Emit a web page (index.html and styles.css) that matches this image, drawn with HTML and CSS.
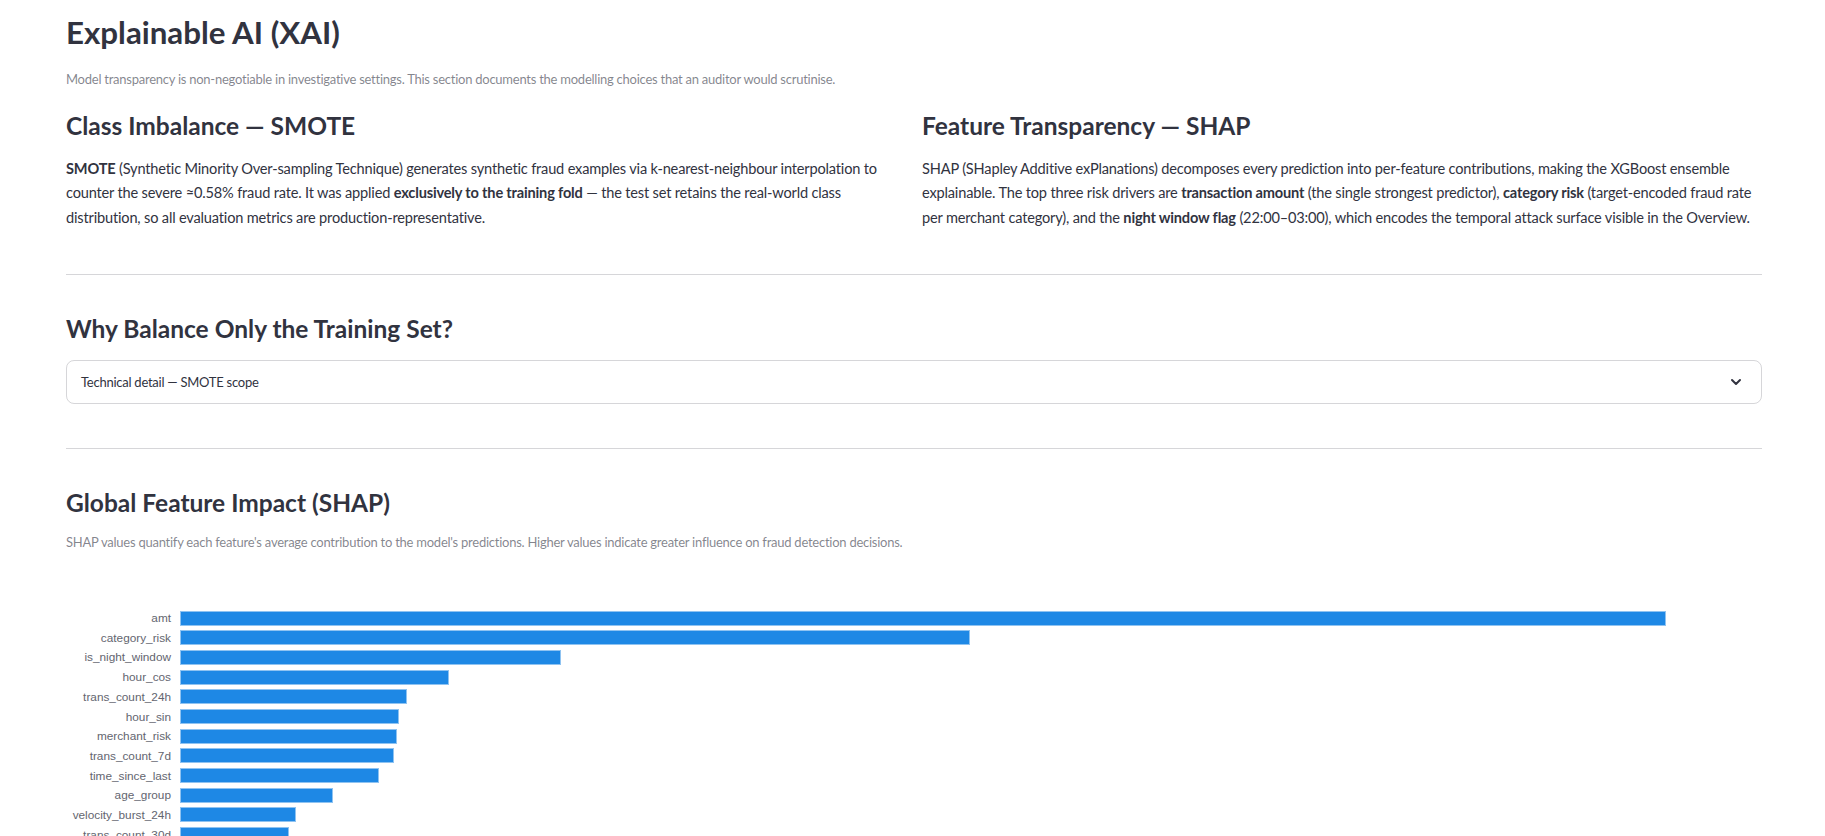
FILE: index.html
```html
<!DOCTYPE html>
<html lang="en">
<head>
<meta charset="utf-8">
<title>Explainable AI (XAI)</title>
<link rel="stylesheet" href="styles.css">
</head>
<body>
<main class="page">
  <h1 class="title">Explainable AI (XAI)</h1>
  <p class="caption subtitle">Model transparency is non-negotiable in investigative settings. This section documents the modelling choices that an auditor would scrutinise.</p>

  <section class="columns">
    <div class="col">
      <h3 class="section-heading">Class Imbalance — SMOTE</h3>
      <p class="body-text"><strong>SMOTE</strong> (Synthetic Minority Over-sampling Technique) generates synthetic fraud examples via k-nearest-neighbour interpolation to<br>counter the severe ≈0.58% fraud rate. It was applied <strong>exclusively to the training fold</strong> — the test set retains the real-world class<br>distribution, so all evaluation metrics are production-representative.</p>
    </div>
    <div class="col">
      <h3 class="section-heading">Feature Transparency — SHAP</h3>
      <p class="body-text">SHAP (SHapley Additive exPlanations) decomposes every prediction into per-feature contributions, making the XGBoost ensemble<br>explainable. The top three risk drivers are <strong>transaction amount</strong> (the single strongest predictor), <strong>category risk</strong> (target-encoded fraud rate<br>per merchant category), and the <strong>night window flag</strong> (22:00–03:00), which encodes the temporal attack surface visible in the Overview.</p>
    </div>
  </section>

  <hr class="divider divider-first">

  <h3 class="section-heading why">Why Balance Only the Training Set?</h3>
  <details class="expander">
    <summary class="expander-summary">
      <span>Technical detail — SMOTE scope</span>
      <svg class="chevron" width="16" height="16" viewBox="0 0 16 16" aria-hidden="true"><path d="M4 6l4 4 4-4" fill="none" stroke="#31333F" stroke-width="2" stroke-linecap="round" stroke-linejoin="round"/></svg>
    </summary>
    <div class="expander-body">SMOTE is fitted and applied only after the train/test split, so no synthetic samples leak into evaluation.</div>
  </details>

  <hr class="divider divider-second">

  <h3 class="section-heading global">Global Feature Impact (SHAP)</h3>
  <p class="caption chart-caption">SHAP values quantify each feature's average contribution to the model's predictions. Higher values indicate greater influence on fraud detection decisions.</p>

  <div class="chart">
    <span class="label">amt</span><div class="track"><div class="bar" style="width:100%"></div></div>
    <span class="label">category_risk</span><div class="track"><div class="bar" style="width:53.16%"></div></div>
    <span class="label">is_night_window</span><div class="track"><div class="bar" style="width:25.67%"></div></div>
    <span class="label">hour_cos</span><div class="track"><div class="bar" style="width:18.09%"></div></div>
    <span class="label">trans_count_24h</span><div class="track"><div class="bar" style="width:15.30%"></div></div>
    <span class="label">hour_sin</span><div class="track"><div class="bar" style="width:14.76%"></div></div>
    <span class="label">merchant_risk</span><div class="track"><div class="bar" style="width:14.60%"></div></div>
    <span class="label">trans_count_7d</span><div class="track"><div class="bar" style="width:14.41%"></div></div>
    <span class="label">time_since_last</span><div class="track"><div class="bar" style="width:13.37%"></div></div>
    <span class="label">age_group</span><div class="track"><div class="bar" style="width:10.28%"></div></div>
    <span class="label">velocity_burst_24h</span><div class="track"><div class="bar" style="width:7.82%"></div></div>
    <span class="label">trans_count_30d</span><div class="track"><div class="bar" style="width:7.33%"></div></div>
    <span class="label">city_pop</span><div class="track"><div class="bar" style="width:5.10%"></div></div>
    <span class="label">gender</span><div class="track"><div class="bar" style="width:3.40%"></div></div>
  </div>
</main>
</body>
</html>
```

FILE: styles.css
```css
html, body {
  margin: 0;
  padding: 0;
  background: #ffffff;
  overflow: hidden;
}

body {
  font-family: "Lato", "Noto Sans", sans-serif;
  color: #31333f;
}

.page {
  display: flex;
  flex-direction: column;
  padding: 0 63px 0 66px;
}

.title {
  margin: 12px 0 0 0;
  font-size: 31.3px;
  line-height: 40px;
  font-weight: 700;
}

.caption {
  margin: 0;
  font-size: 13px;
  line-height: 20px;
  letter-spacing: -0.25px;
  color: rgba(49, 51, 63, 0.6);
}

.subtitle {
  margin-top: 17px;
}

.columns {
  display: grid;
  grid-template-columns: 1fr 1fr;
  column-gap: 16px;
  margin-top: 20px;
}

.section-heading {
  margin: 0;
  font-size: 24.5px;
  line-height: 34px;
  font-weight: 700;
}

.body-text {
  margin: 14px 0 0 0;
  font-size: 14.6px;
  line-height: 24.4px;
  letter-spacing: -0.18px;
}

.body-text strong {
  font-weight: 700;
}

.divider {
  width: 100%;
  height: 1px;
  border: 0;
  margin: 0;
  background: rgba(49, 51, 63, 0.2);
}

.divider-first {
  margin-top: 44px;
}

.why {
  margin-top: 37px;
}

.expander {
  margin-top: 14px;
  border: 1px solid rgba(49, 51, 63, 0.2);
  border-radius: 8px;
}

.expander-summary {
  list-style: none;
  display: flex;
  align-items: center;
  justify-content: space-between;
  height: 42px;
  padding: 0 17px 0 14px;
  font-size: 13px;
  letter-spacing: -0.25px;
  cursor: pointer;
}

.expander-summary::-webkit-details-marker {
  display: none;
}

.expander-body {
  padding: 0 14px 14px;
  font-size: 14px;
}

.divider-second {
  margin-top: 44px;
}

.global {
  margin-top: 37px;
}

.chart-caption {
  margin-top: 12px;
}

.chart {
  display: grid;
  grid-template-columns: 105px 1486px;
  column-gap: 9px;
  grid-auto-rows: 19.7px;
  align-items: center;
  margin-top: 56px;
}

.label {
  font-family: "Liberation Sans", Arial, sans-serif;
  font-size: 11.8px;
  color: #63656f;
  text-align: right;
  white-space: nowrap;
}

.track {
  height: 15px;
}

.bar {
  height: 100%;
  box-sizing: border-box;
  background: #1e88e5;
  border: 1px solid #8fc3f1;
}
```
